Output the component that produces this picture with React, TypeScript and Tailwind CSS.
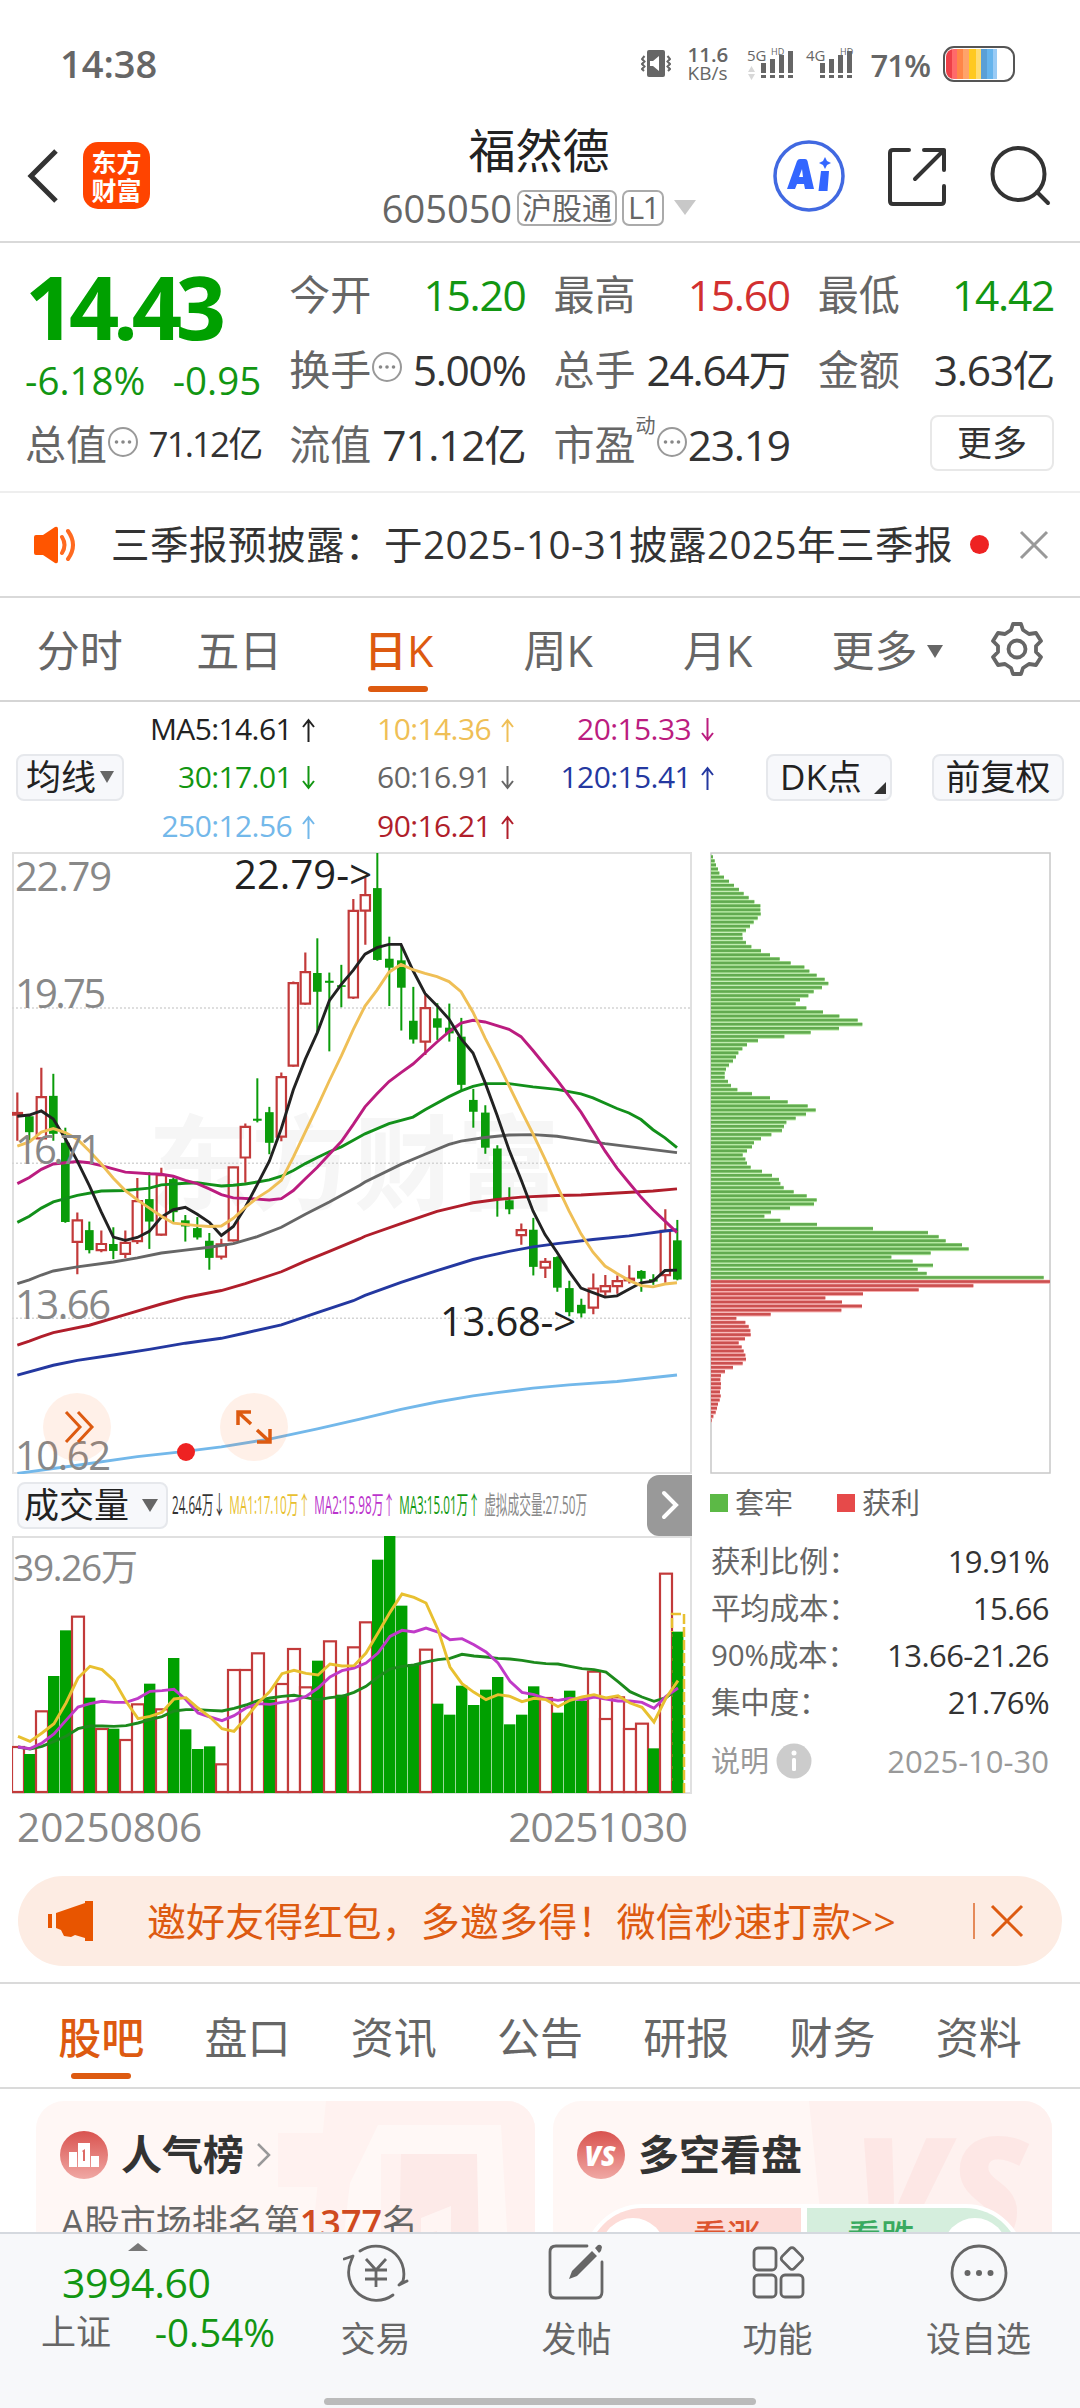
import { useState } from "react";
import type { ReactNode } from "react";

type Tone = "up" | "down";

// [tone, high, body top, body bottom, low] in plot units, y grows downwards
const candles: [Tone, number, number, number, number][] = [
  ["up", 617, 666, 672, 735],
  ["down", 670, 675, 714, 735],
  ["up", 556, 627, 730, 735],
  ["down", 571, 625, 718, 735],
  ["down", 703, 740, 934, 936],
  ["up", 911, 929, 984, 1062],
  ["down", 933, 954, 1003, 1011],
  ["up", 955, 987, 1004, 1008],
  ["down", 947, 988, 1005, 1025],
  ["up", 955, 984, 1013, 1022],
  ["up", 826, 882, 982, 988],
  ["down", 812, 878, 933, 1000],
  ["up", 801, 818, 966, 968],
  ["down", 825, 829, 910, 935],
  ["down", 917, 930, 945, 982],
  ["down", 922, 949, 972, 977],
  ["down", 961, 980, 1022, 1051],
  ["up", 975, 988, 1020, 1026],
  ["up", 798, 799, 980, 982],
  ["up", 693, 700, 777, 838],
  ["down", 582, 681, 686, 690],
  ["down", 652, 665, 740, 768],
  ["up", 568, 578, 726, 736],
  ["up", 345, 348, 552, 554],
  ["up", 274, 321, 400, 402],
  ["down", 239, 324, 370, 470],
  ["down", 323, 343, 348, 516],
  ["down", 304, 354, 358, 408],
  ["up", 143, 171, 385, 388],
  ["up", 90, 132, 172, 255],
  ["down", 30, 116, 292, 294],
  ["down", 235, 289, 311, 405],
  ["down", 258, 293, 360, 465],
  ["down", 358, 441, 487, 497],
  ["up", 375, 409, 493, 525],
  ["down", 398, 435, 458, 488],
  ["down", 399, 458, 472, 492],
  ["down", 434, 480, 598, 612],
  ["down", 608, 635, 664, 703],
  ["down", 648, 666, 752, 767],
  ["down", 746, 754, 878, 921],
  ["down", 849, 881, 903, 915],
  ["up", 938, 953, 967, 990],
  ["down", 924, 953, 1044, 1065],
  ["up", 1022, 1031, 1047, 1071],
  ["down", 1018, 1020, 1095, 1105],
  ["down", 1078, 1096, 1155, 1165],
  ["down", 1122, 1137, 1158, 1168],
  ["up", 1060, 1096, 1145, 1160],
  ["up", 1064, 1090, 1105, 1115],
  ["up", 1065, 1078, 1092, 1110],
  ["up", 1040, 1072, 1078, 1085],
  ["down", 1052, 1054, 1073, 1105],
  ["down", 1062, 1074, 1080, 1088],
  ["up", 903, 955, 1065, 1083],
  ["down", 929, 979, 1075, 1077],
];

const maLines = [
  {
    color: "#73b8ea",
    points:
      "52,1550 232,1530 412,1509 556,1496 664,1485 808,1466 952,1441 1080,1417 1203,1393 1311,1375 1419,1360 1491,1352 1599,1341 1707,1333 1851,1325 2031,1309",
  },
  {
    color: "#2438a0",
    points:
      "52,1309 160,1285 232,1273 340,1260 448,1246 556,1231 664,1219 736,1206 844,1186 952,1156 1060,1127 1095,1114 1203,1082 1311,1053 1419,1026 1455,1019 1527,1006 1599,995 1671,987 1779,977 1887,968 1995,956 2031,953",
  },
  {
    color: "#b01e2b",
    points:
      "52,1236 88,1226 124,1215 160,1205 268,1187 376,1161 484,1135 556,1119 664,1102 736,1085 844,1056 916,1030 988,1006 1080,975 1095,969 1203,938 1311,908 1383,894 1419,887 1491,879 1563,873 1671,869 1743,868 1851,863 1959,858 2031,853",
  },
  {
    color: "#666666",
    points:
      "52,1085 88,1076 124,1064 160,1054 232,1044 340,1032 412,1022 484,1010 556,1003 628,996 700,987 772,970 844,947 916,915 988,885 1080,844 1095,836 1203,793 1275,768 1347,744 1383,736 1455,727 1527,721 1600,720 1671,724 1743,733 1815,742 1923,753 2031,764",
  },
  {
    color: "#12901a",
    points:
      "52,935 88,920 124,900 160,885 232,869 304,858 376,857 448,851 484,843 556,839 592,838 628,842 664,846 700,844 736,841 772,836 808,831 844,822 880,808 916,791 952,776 988,762 1024,750 1060,734 1095,718 1167,693 1239,677 1275,659 1347,627 1383,613 1419,602 1455,595 1527,595 1599,603 1671,609 1743,620 1779,630 1851,656 1887,667 1923,683 1959,708 1995,728 2031,752",
  },
  {
    color: "#bb1c7f",
    points:
      "52,840 88,825 124,805 160,792 232,786 268,789 304,796 376,812 448,816 484,817 520,822 556,832 592,840 628,853 664,867 700,875 772,878 808,880 844,877 880,857 916,828 952,800 988,768 1024,737 1060,695 1095,652 1131,620 1167,590 1203,568 1239,547 1275,520 1311,493 1347,468 1383,447 1419,440 1455,444 1491,453 1527,462 1563,480 1599,514 1635,550 1671,586 1707,625 1743,665 1779,712 1815,760 1851,802 1887,838 1923,873 1959,904 1995,932 2031,960",
  },
  {
    color: "#222222",
    points:
      "52,675 88,672 124,662 160,682 196,730 232,785 268,845 304,910 340,971 376,979 412,972 448,957 484,922 520,904 556,898 592,915 628,935 664,967 700,945 736,898 772,842 808,785 844,705 880,610 916,535 952,470 988,392 1024,352 1060,317 1095,278 1131,262 1167,254 1203,254 1239,318 1275,374 1311,404 1347,437 1383,485 1419,520 1455,592 1491,672 1527,757 1563,830 1599,907 1635,965 1671,1008 1707,1055 1743,1096 1779,1107 1815,1118 1851,1115 1887,1099 1923,1083 1959,1079 1995,1053 2031,1052",
  },
  {
    color: "#efbf56",
    points:
      "52,748 88,738 124,714 160,705 196,715 232,731 268,760 304,792 340,827 376,857 412,880 448,900 484,920 520,937 556,940 592,943 628,945 664,944 700,925 736,898 772,875 808,856 844,832 880,775 916,713 952,652 988,588 1024,527 1060,462 1095,405 1131,366 1167,322 1203,303 1239,316 1275,325 1311,333 1347,345 1383,370 1419,420 1455,483 1491,540 1527,600 1563,660 1599,718 1635,780 1671,845 1707,907 1743,963 1779,1008 1815,1042 1851,1060 1887,1077 1923,1090 1959,1093 1995,1086 2031,1083",
  },
];

// chip distribution, one bar per price step
const trapped = [
  39, 44, 48, 54, 58, 72, 87, 102, 117, 131, 146, 163, 181, 181, 182, 173, 161, 150, 138, 127, 128,
  138, 154, 183, 210, 239, 272, 313, 328, 350, 374, 385, 366, 341, 325, 300, 287, 319, 369, 418, 473,
  487, 417, 332, 253, 174, 141, 127, 115, 108, 99, 87, 78, 74, 74, 84, 93, 112, 156, 210, 263, 323,
  347, 318, 287, 259, 252, 246, 214, 183, 162, 156, 141, 128, 136, 141, 152, 186, 216, 237, 241, 251,
  281, 320, 350, 342, 270, 213, 193, 241, 351, 519, 684, 716, 737, 786, 806, 692, 574, 638, 699, 653,
  680, 1031,
];
const profit = [
  1050, 820, 656, 489, 376, 426, 486, 424, 212, 109, 136, 146, 151, 152, 135, 116, 125, 131, 136, 138,
  128, 99, 75, 63, 61, 63, 62, 60, 62, 59, 54, 51, 47, 40, 35,
];

const volumes: [Tone, number][] = [
  ["up", 829], ["down", 853], ["up", 722], ["down", 619], ["down", 482], ["up", 438], ["down", 684],
  ["up", 775], ["down", 777], ["up", 808], ["up", 701], ["down", 642], ["up", 716], ["down", 565],
  ["down", 779], ["down", 838], ["down", 830], ["up", 881], ["up", 598], ["up", 598], ["up", 548],
  ["down", 690], ["up", 640], ["up", 535], ["up", 650], ["down", 573], ["up", 512], ["down", 675],
  ["up", 530], ["up", 455], ["down", 270], ["down", 199], ["down", 408], ["down", 583], ["up", 537],
  ["down", 702], ["down", 735], ["down", 648], ["down", 706], ["down", 660], ["down", 622],
  ["down", 764], ["down", 735], ["down", 650], ["up", 682], ["down", 729], ["down", 663],
  ["down", 693], ["up", 603], ["up", 745], ["up", 680], ["up", 775], ["up", 759], ["down", 836],
  ["up", 309], ["down", 486],
];

const volumeMas = [
  {
    color: "#1c8a1c",
    values: [
      832, 838, 830, 815, 800, 777, 769, 769, 770, 768, 760, 750, 741, 724, 720, 720, 722, 724, 716,
      706, 693, 685, 680, 677, 684, 690, 684, 680, 668, 650, 622, 598, 590, 586, 577, 570, 566, 554,
      559, 562, 566, 568, 572, 578, 582, 583, 590, 597, 600, 607, 636, 666, 682, 695, 684, 657,
    ],
  },
  {
    color: "#c03ac8",
    values: [
      832, 837, 820, 793, 752, 712, 702, 695, 698, 698, 686, 665, 663, 659, 690, 730, 742, 753, 738,
      715, 702, 704, 698, 693, 680, 655, 622, 603, 595, 580, 550, 500, 482, 487, 475, 487, 510, 507,
      525, 547, 580, 635, 668, 675, 687, 692, 686, 690, 682, 688, 694, 694, 698, 716, 680, 655,
    ],
  },
  {
    color: "#e8c030",
    values: [
      800, 815, 790, 762, 700, 625, 590, 600, 632, 695, 747, 740, 728, 688, 684, 715, 742, 777, 785,
      745, 700, 665, 612, 602, 611, 616, 583, 589, 588, 550, 490, 428, 373, 383, 400, 480, 592, 642,
      668, 690, 675, 680, 696, 686, 690, 711, 692, 682, 675, 685, 678, 700, 713, 757, 685, 633,
    ],
  },
];

const volY = (v: number) => (v - 199) / 3;

function StatusBar() {
  return (
    <div className="flex h-[110px] items-center pt-[17px] pl-[60px] pr-[65px] font-semibold text-[#666]">
      <span className="text-[38px]">14:38</span>
      <svg className="ml-auto" width="30" height="28" viewBox="0 0 30 28">
        <rect x="6" y="0" width="18" height="27" rx="2" fill="#666" />
        <path d="M9 11h3l6-5v15l-6-5H9z" fill="#fff" />
        <path
          d="M3.5 6 1 9l2.500 2.500L1 14l2.500 2.500L1 19l2 2M26.500 6l2.500 3-2.500 2.500L29 14l-2.500 2.500L29 19l-2 2"
          fill="none"
          stroke="#666"
          strokeWidth="2"
        />
      </svg>
      <div className="ml-[17px] w-[44px] text-[20.500px] leading-[19px]">
        <div>11.6</div>
        <div className="text-[19px] font-medium">KB/s</div>
      </div>
      <Signal label="5G" arrows className="ml-[15px]" />
      <Signal label="4G" className="ml-[9px]" />
      <span className="ml-[15px] pt-[3px] text-[31px] tracking-[-0.03em]">71%</span>
      <svg className="ml-[13px]" width="72" height="36" viewBox="0 0 72 36">
        <clipPath id="charge">
          <rect x="3" y="3" width="66" height="30" rx="8" />
        </clipPath>
        <rect x="1" y="1" width="70" height="34" rx="10" fill="#fff" stroke="#555" strokeWidth="2" />
        <g clipPath="url(#charge)">
          <rect x="3" y="3" width="6" height="30" fill="#ee4048" />
          <rect x="9" y="3" width="5" height="30" fill="#ff6a6a" />
          <rect x="14" y="3" width="6" height="30" fill="#ff8648" />
          <rect x="20" y="3" width="6" height="30" fill="#ffa36a" />
          <rect x="26" y="3" width="7" height="30" fill="#ffc91f" />
          <rect x="33" y="3" width="5" height="30" fill="#ffdc70" />
          <rect x="38" y="3" width="6" height="30" fill="#5a9fd6" />
          <rect x="44" y="3" width="6" height="30" fill="#66b4ec" />
          <rect x="50" y="3" width="4" height="30" fill="#9acbf5" />
        </g>
      </svg>
    </div>
  );
}

function Signal({ label, arrows, className }: { label: string; arrows?: boolean; className: string }) {
  return (
    <svg className={`overflow-visible ${className}`} width="50" height="36" viewBox="0 0 50 36" fill="#666">
      <text x="0" y="15" fontSize="15" fontWeight="500">
        {label}
      </text>
      <text x={arrows ? 24 : 34} y="9" fontSize="9" fontWeight="400">
        HD
      </text>
      {[17, 13, 9, 5].map((top, i) => (
        <g key={top}>
          <rect x={14 + i * 9} y={top} width="5" height={27 - top} />
          <rect x={14 + i * 9} y="29" width="5" height="3" />
        </g>
      ))}
      {arrows && <path d="M1 26l3.500-6 3.500 6zM1 28h7l-3.500 6z" fill="#d8d8d8" />}
    </svg>
  );
}

function Header() {
  return (
    <header className="flex h-[133px] items-center border-b-2 border-[#d9d9d9] pr-[28px] pl-[27px]">
      <div className="flex w-[326px] items-center">
        <svg width="32" height="54" viewBox="0 0 32 54" fill="none" stroke="#333" strokeWidth="5">
          <path d="M29 2 4 27l25 25" />
        </svg>
        <div className="ml-[24px] flex h-[67px] w-[67px] flex-col justify-center rounded-[15px] bg-[#ff4400] text-center text-[25px] font-bold leading-[28px] text-white">
          <span>东方</span>
          <span>财富</span>
        </div>
      </div>
      <div className="flex w-[372px] flex-col items-center">
        <h1 className="text-[47px] leading-[56px] text-[#222]">福然德</h1>
        <div className="mt-[8px] flex items-center gap-[5px] text-[38px] leading-[44px] text-[#666]">
          <span>605050</span>
          <span className="h-[36px] rounded-[7px] border-2 border-[#aaa] px-[3px] text-[30px] leading-[31px]">
            沪股通
          </span>
          <span className="h-[36px] rounded-[7px] border-2 border-[#aaa] px-[4px] text-[31px] leading-[31px] tracking-[-0.06em]">
            L1
          </span>
          <svg className="ml-[5px]" width="22" height="15" viewBox="0 0 22 15">
            <path d="M0 0h22L11 15z" fill="#c8c8c8" />
          </svg>
        </div>
      </div>
      <div className="ml-auto flex items-center">
        <svg width="72" height="72" viewBox="0 0 72 72">
          <circle cx="36" cy="36" r="34" fill="#fff" stroke="#4169e1" strokeWidth="3.500" />
          <path
            d="M14 49 24 21q1-2 3-2h5q2 0 2.500 2L41 49h-9l-1-5h-7l-2 5zM26 37h4l-1-8z"
            fill="#3366ff"
            fillRule="evenodd"
          />
          <path d="M48 31h8l-1.500 20h-9zM52 17l2 4 4 2-4 2-2 4-2-4-4-2 4-2z" fill="#3366ff" />
        </svg>
        <svg
          className="ml-[42px]"
          width="60"
          height="60"
          viewBox="0 0 60 60"
          fill="none"
          stroke="#333"
          strokeWidth="4"
          strokeLinecap="round"
          strokeLinejoin="round"
        >
          <path d="M22 4H6q-3 0-3 3v48q0 3 3 3h48q3 0 3-3V40M37 4h20v20M57 4 28 33" />
        </svg>
        <svg
          className="ml-[43px]"
          width="62"
          height="60"
          viewBox="0 0 62 60"
          fill="none"
          stroke="#333"
          strokeWidth="4"
          strokeLinecap="round"
        >
          <circle cx="28.500" cy="28" r="26" />
          <path d="m47 46 11 11" />
        </svg>
      </div>
    </header>
  );
}

function Dots() {
  return (
    <svg width="32" height="32" viewBox="0 0 32 32" className="mb-[6px] shrink-0">
      <circle cx="16" cy="16" r="14" fill="none" stroke="#999" strokeWidth="2" />
      <circle cx="9.500" cy="16" r="1.800" fill="#888" />
      <circle cx="16" cy="16" r="1.800" fill="#888" />
      <circle cx="22.500" cy="16" r="1.800" fill="#888" />
    </svg>
  );
}

function Cell({
  label,
  value,
  tone = "text-[#333]",
  info,
  sup,
}: {
  label: string;
  value: string;
  tone?: string;
  info?: boolean;
  sup?: string;
}) {
  return (
    <div className="flex h-[75px] items-center whitespace-nowrap">
      <span className="text-[41px] text-[#666]">{label}</span>
      {sup && <span className="mb-[38px] w-[21px] text-[20px] text-[#666]">{sup}</span>}
      {info && <Dots />}
      <span className={`ml-auto text-[42.500px] tracking-[-0.03em] ${tone}`}>{value}</span>
    </div>
  );
}

function Quote() {
  return (
    <section className="grid h-[250px] grid-cols-4 gap-x-[28px] border-b-2 border-[#eee] pr-[26px] pl-[25px] pt-[14px]">
      <div>
        <div className="h-[98px] text-[88px] font-bold leading-[98px] tracking-[-0.072em] text-[#00a000]">
          14.43
        </div>
        <div className="flex h-[52px] items-center justify-between text-[38.500px] text-[#129612]">
          <span>-6.18%</span>
          <span>-0.95</span>
        </div>
        <div className="flex h-[75px] items-center whitespace-nowrap">
          <span className="text-[41px] text-[#666]">总值</span>
          <Dots />
          <span className="ml-auto text-[35px] tracking-[-0.055em] text-[#333]">71.12亿</span>
        </div>
      </div>
      <div>
        <Cell label="今开" value="15.20" tone="text-[#129612]" />
        <Cell label="换手" value="5.00%" info />
        <Cell label="流值" value="71.12亿" />
      </div>
      <div>
        <Cell label="最高" value="15.60" tone="text-[#d23030]" />
        <Cell label="总手" value="24.64万" />
        <Cell label="市盈" value="23.19" sup="动" info />
      </div>
      <div>
        <Cell label="最低" value="14.42" tone="text-[#129612]" />
        <Cell label="金额" value="3.63亿" />
        <div className="flex h-[71px] items-center justify-end">
          <button
            type="button"
            className="h-[56px] w-[124px] rounded-[8px] border-2 border-[#e8e8e8] text-[35px] leading-[50px] text-[#333]"
          >
            更多
          </button>
        </div>
      </div>
    </section>
  );
}

function Notice() {
  return (
    <section className="flex h-[105px] items-center border-b-2 border-[#d9d9d9] pr-[30px] pl-[33px]">
      <svg width="46" height="38" viewBox="0 0 46 38">
        <path d="M1 11q0-2 2-2h7L22 1q3-1 3 2v32q0 3-3 2L10 29H3q-2 0-2-2z" fill="#ff5500" />
        <path
          d="M29 11q5 8 0 16M35 5q10 14 0 28"
          fill="none"
          stroke="#ff6a20"
          strokeWidth="4"
          strokeLinecap="round"
        />
      </svg>
      <p className="ml-[32px] text-[38.500px] tracking-[0.013em] whitespace-nowrap text-[#333]">
        三季报预披露：于2025-10-31披露2025年三季报
      </p>
      <span className="ml-auto h-[19px] w-[19px] shrink-0 rounded-full bg-[#ee2222]" />
      <svg
        className="ml-[29px] shrink-0"
        width="32"
        height="32"
        viewBox="0 0 32 32"
        stroke="#999"
        strokeWidth="3"
      >
        <path d="m3 3 26 26M29 3 3 29" />
      </svg>
    </section>
  );
}

function PeriodTabs() {
  const [active, setActive] = useState("日K");
  return (
    <nav className="flex h-[104px] items-center border-b-2 border-[#d5d5d5] text-[43px] text-[#666]">
      {["分时", "五日", "日K", "周K", "月K"].map((tab) => (
        <button
          key={tab}
          type="button"
          onClick={() => setActive(tab)}
          className={`relative h-full w-[159.500px] shrink-0 pt-[4px] ${tab === active ? "font-medium text-[#dd5a10]" : ""}`}
        >
          {tab}
          {tab === active && (
            <span className="absolute bottom-[8px] left-[49px] h-[6px] w-[60px] rounded-full bg-[#dd5a10]" />
          )}
        </button>
      ))}
      <button type="button" className="ml-[34px] flex items-center gap-[9px] pt-[4px]">
        更多
        <svg width="16" height="13" viewBox="0 0 16 13">
          <path d="M0 0h16L8 13z" fill="#666" />
        </svg>
      </button>
      <svg
        className="ml-[47px]"
        width="54"
        height="54"
        viewBox="0 0 54 54"
        fill="none"
        stroke="#666"
        strokeWidth="3.800"
        strokeLinejoin="round"
      >
        <path d="M23 2h8l2 6 6 4 7-1 5 8-5 5v6l5 5-5 8-7-1-6 4-2 6h-8l-2-6-6-4-7 1-5-8 5-5v-6l-5-5 5-8 7 1 6-4z" />
        <circle cx="27" cy="27" r="8.500" />
      </svg>
    </nav>
  );
}

const pill = "flex h-[47px] items-center rounded-[8px] border-2 border-[#e6e8ec] bg-[#f7f8fb] text-[#222]";

function MaLegend() {
  const ma = "text-right whitespace-nowrap";
  return (
    <section className="flex h-[150px] items-center pr-[16px] pl-[16px]">
      <button type="button" className={`${pill} w-[108px] justify-between px-[8px] text-[35px]`}>
        均线
        <svg width="14" height="12" viewBox="0 0 14 12">
          <path d="M0 0h14L7 12z" fill="#666" />
        </svg>
      </button>
      <div className="grid w-[592px] grid-cols-[191px_199px_200px] pt-[1px] text-[30px] leading-[48.500px] tracking-[-0.02em]">
        <span className={`${ma} text-[#222]`}>MA5:14.61<Arrow /></span>
        <span className={`${ma} text-[#efbf56]`}>10:14.36<Arrow /></span>
        <span className={`${ma} text-[#bb1c7f]`}>20:15.33<Arrow down /></span>
        <span className={`${ma} text-[#129612]`}>30:17.01<Arrow down /></span>
        <span className={`${ma} text-[#666]`}>60:16.91<Arrow down /></span>
        <span className={`${ma} text-[#2438a0]`}>120:15.41<Arrow /></span>
        <span className={`${ma} text-[#73b8ea]`}>250:12.56<Arrow /></span>
        <span className={`${ma} text-[#b01e2b]`}>90:16.21<Arrow /></span>
      </div>
      <button type="button" className={`${pill} ml-auto w-[126px] justify-between pr-[4px] pl-[12px] text-[35px]`}>
        <span>DK点</span>
        <svg className="mt-[22px]" width="12" height="12" viewBox="0 0 12 12">
          <path d="M12 0v12H0z" fill="#333" />
        </svg>
      </button>
      <button type="button" className={`${pill} ml-[40px] w-[132px] justify-center text-[35px]`}>
        前复权
      </button>
    </section>
  );
}

function Arrow({ down }: { down?: boolean }) {
  return (
    <svg
      className={`ml-[10px] inline-block align-[-2px] ${down ? "rotate-180" : ""}`}
      width="13"
      height="24"
      viewBox="0 0 13 24"
      fill="none"
      stroke="currentColor"
      strokeWidth="2"
    >
      <path d="M6.500 24V2M1 9l5.500-7L12 9" />
    </svg>
  );
}

function KLineChart() {
  return (
    <svg className="block" width="680" height="622" viewBox="0 0 680 622">
      <rect x="1" y="1" width="678" height="620" fill="#fff" stroke="#e0e0e0" strokeWidth="2" />
      <text x="136" y="350" fontSize="103" fontWeight="700" fill="#f6f6f6">
        东方财富
      </text>
      <g transform="translate(-12 -11.250) scale(0.33333 0.40816)">
        {[410, 790, 1170].map((y) => (
          <path
            key={y}
            d={`M36 ${y}H2076`}
            stroke="#d4d4d4"
            strokeWidth="1.500"
            strokeDasharray="2 2"
            vectorEffect="non-scaling-stroke"
          />
        ))}
        {candles.map(([tone, high, top, bottom, low], i) => {
          const x = 52 + i * 36;
          return tone === "up" ? (
            <g key={i} fill="none" stroke="#c23a3a" strokeWidth="2.200">
              <path d={`M${x} ${high}V${top}M${x} ${bottom}V${low}`} vectorEffect="non-scaling-stroke" />
              <rect
                x={x - 14}
                y={top + 1}
                width="28"
                height={Math.max(bottom - top - 2, 2)}
                vectorEffect="non-scaling-stroke"
              />
            </g>
          ) : (
            <g key={i} fill="#0a9c0a">
              <rect x={x - 3} y={high} width="6" height={low - high} />
              <rect x={x - 13} y={top} width="26" height={bottom - top} />
            </g>
          );
        })}
        {maLines.map((line) => (
          <polyline
            key={line.color}
            points={line.points}
            fill="none"
            stroke={line.color}
            strokeWidth="2.900"
            vectorEffect="non-scaling-stroke"
          />
        ))}
      </g>
      <g fontSize="40" fill="#888">
        <text x="3" y="39" textLength="97">22.79</text>
        <text x="3" y="156" textLength="91">19.75</text>
        <text x="3" y="312" textLength="87">16.71</text>
        <text x="3" y="467" textLength="96">13.66</text>
        <text x="3" y="618" textLength="96">10.62</text>
      </g>
      <g fontSize="40" fill="#222">
        <text x="222" y="37" textLength="138">22.79-&gt;</text>
        <text x="428" y="484" textLength="136">13.68-&gt;</text>
      </g>
      <circle cx="65" cy="575" r="34" fill="#ff6a20" fillOpacity="0.1" />
      <circle cx="242" cy="575" r="34" fill="#ff6a20" fillOpacity="0.1" />
      <g fill="none" stroke="#dd5a10" strokeWidth="3">
        <path d="m54 560 14 15-14 15M66 560l14 15-14 15" />
        <path d="M226 573v-13h13M227 561l12 11M258 577v13h-13M257 589l-12-11" strokeWidth="3.500" />
      </g>
      <circle cx="174" cy="600" r="9" fill="#ee2222" />
    </svg>
  );
}

function ChipChart() {
  return (
    <svg className="block" width="341" height="622" viewBox="0 0 341 622">
      <rect x="1" y="1" width="339" height="620" fill="#fff" stroke="#c8c8c8" strokeWidth="1.500" />
      {[...trapped, ...profit].map((end, i) => {
        const green = i < trapped.length;
        const width = (end - 33) / 3;
        const y = 2.900 + i * 4.085;
        return (
          <g key={i}>
            <rect x="1" y={y} width={width} height="4.085" fill={green ? "#b4e8a0" : "#f6b0b0"} />
            <rect x="1" y={y + 0.500} width={width} height="2.600" fill={green ? "#62ab50" : "#cc5050"} />
          </g>
        );
      })}
    </svg>
  );
}

function VolumeChart() {
  return (
    <svg className="block" width="680" height="258" viewBox="0 0 680 258">
      <rect x="1" y="1" width="678" height="256" fill="#fff" stroke="#e0e0e0" strokeWidth="2" />
      <text x="1" y="45" fontSize="37" fill="#888" textLength="125">39.26万</text>
      {volumes.map(([tone, top], i) => {
        const x = i * 12;
        const y = volY(top);
        return tone === "up" ? (
          <rect key={i} x={x} y={y + 1} width="12" height={255 - y} fill="#fff" stroke="#c23a3a" strokeWidth="2.200" />
        ) : (
          <rect key={i} x={x} y={y} width="11.400" height={257 - y} fill="#00a000" />
        );
      })}
      <path d="M672 257V78h-12v18" fill="none" stroke="#e8c030" strokeWidth="2.500" strokeDasharray="10 3" />
      <path d="M660 257V96" stroke="#8a7a20" strokeWidth="1.500" strokeDasharray="3 9" />
      {volumeMas.map((line) => (
        <polyline
          key={line.color}
          points={line.values.map((v, i) => `${6 + i * 12},${volY(v)}`).join(" ")}
          fill="none"
          stroke={line.color}
          strokeWidth="2.900"
        />
      ))}
    </svg>
  );
}

function VolumeHeader() {
  return (
    <div className="flex h-[62px] items-center pl-[5px]">
      <button type="button" className={`${pill} w-[151px] shrink-0 justify-between pr-[8px] pl-[5px] text-[35px]`}>
        成交量
        <svg width="16" height="13" viewBox="0 0 16 13">
          <path d="M0 0h16L8 13z" fill="#666" />
        </svg>
      </button>
      <div className="ml-[4px] w-[440px]">
        <div className="flex w-max origin-left scale-x-[0.467] gap-[9px] text-[25px] whitespace-nowrap">
          <span className="text-[#333]">24.64万↓</span>
          <span className="text-[#e8bf30]">MA1:17.10万↑</span>
          <span className="text-[#bb33cc]">MA2:15.98万↑</span>
          <span className="text-[#119911]">MA3:15.01万↑</span>
          <span className="text-[#888]">虚拟成交量:27.50万</span>
        </div>
      </div>
      <button
        type="button"
        className="ml-auto flex h-[61px] w-[45px] shrink-0 items-center justify-center rounded-l-[12px] bg-[#999]"
      >
        <svg width="18" height="30" viewBox="0 0 18 30" fill="none" stroke="#fff" strokeWidth="4" strokeLinecap="round">
          <path d="m3 3 12 12L3 27" />
        </svg>
      </button>
    </div>
  );
}

const chipStats = [
  ["获利比例：", "19.91%"],
  ["平均成本：", "15.66"],
  ["90%成本：", "13.66-21.26"],
  ["集中度：", "21.76%"],
];

function ChipPanel() {
  return (
    <div className="w-[341px]">
      <ChipChart />
      <div className="mt-[7px] flex h-[44px] items-center text-[29px] text-[#666]">
        <span className="mr-[7px] h-[18px] w-[18px] bg-[#5cb946]" />
        套牢
        <span className="mr-[7px] ml-[44px] h-[18px] w-[18px] bg-[#e64a4a]" />
        获利
      </div>
      <dl className="mt-[13px]">
        {chipStats.map(([label, value]) => (
          <div key={label} className="flex h-[47px] items-center justify-between pr-[2px] pl-[1px]">
            <dt className="text-[29.500px] tracking-[-0.005em] text-[#666]">{label}</dt>
            <dd className="text-[31px] tracking-[-0.018em] text-[#333]">{value}</dd>
          </div>
        ))}
      </dl>
      <div className="mt-[13px] flex h-[44px] items-center pr-[2px] pl-[1px] text-[#999]">
        <span className="text-[29px]">说明</span>
        <svg className="ml-[7px]" width="36" height="36" viewBox="0 0 36 36">
          <circle cx="18" cy="18" r="17.500" fill="#ccc" />
          <circle cx="18" cy="10" r="2.500" fill="#fff" />
          <rect x="16" y="15" width="4" height="13" rx="1.500" fill="#fff" />
        </svg>
        <span className="ml-auto text-[31px]">2025-10-30</span>
      </div>
    </div>
  );
}

function Charts() {
  return (
    <section className="flex h-[1024px] gap-[18px] pl-[12px]">
      <div className="w-[680px]">
        <KLineChart />
        <VolumeHeader />
        <VolumeChart />
        <div className="flex justify-between px-[5px] pt-[3px] text-[40.500px] leading-[60px] text-[#888]">
          <span>20250806</span>
          <span className="tracking-[-0.02em]">20251030</span>
        </div>
      </div>
      <ChipPanel />
    </section>
  );
}

function InviteBanner() {
  return (
    <div className="mx-[18px] flex h-[90px] shrink-0 items-center rounded-full bg-[#fdece3] pr-[38px] pl-[29px] text-[#dd5a10]">
      <svg width="48" height="42" viewBox="0 0 48 42" fill="#e85500">
        <path d="M1 14h4v14H1zM9 13l29-10V1h8v40h-8v-3l-10-3-4 2-7-1-3-6-5-2z" />
      </svg>
      <p className="ml-[52px] text-[39px] tracking-[0.003em] whitespace-nowrap">
        邀好友得红包，多邀多得！微信秒速打款&gt;&gt;
      </p>
      <span className="ml-auto h-[36px] w-[2px] bg-[#e58a5a]" />
      <svg className="ml-[15px]" width="34" height="34" viewBox="0 0 34 34" stroke="#dd5a10" strokeWidth="3">
        <path d="m2 2 30 30M32 2 2 32" />
      </svg>
    </div>
  );
}

function InfoTabs() {
  const [active, setActive] = useState("股吧");
  return (
    <nav className="mt-[16px] flex h-[107px] shrink-0 items-center border-y-2 border-[#dadada] px-[28px] text-[43px] text-[#666]">
      {["股吧", "盘口", "资讯", "公告", "研报", "财务", "资料"].map((tab) => (
        <button
          key={tab}
          type="button"
          onClick={() => setActive(tab)}
          className={`relative h-full flex-1 pt-[5px] ${tab === active ? "font-medium text-[#dd5a10]" : ""}`}
        >
          {tab}
          {tab === active && (
            <span className="absolute bottom-[8px] left-[43px] h-[6px] w-[60px] rounded-full bg-[#dd5a10]" />
          )}
        </button>
      ))}
    </nav>
  );
}

function CardTitle({ icon, children }: { icon: ReactNode; children: ReactNode }) {
  return (
    <div className="relative flex h-[50px] items-center gap-[12px] text-[41px] font-bold text-[#333]">
      <svg width="50" height="50" viewBox="0 0 50 50">
        <defs>
          <linearGradient id="badge" x1="0" y1="0" x2="0" y2="1">
            <stop offset="0" stopColor="#d9534f" />
            <stop offset="1" stopColor="#f0a8a4" />
          </linearGradient>
        </defs>
        <circle cx="25" cy="25" r="24" fill="url(#badge)" />
        {icon}
      </svg>
      {children}
    </div>
  );
}

function Cards() {
  return (
    <section className="flex min-h-0 flex-1 gap-[18px] overflow-hidden pt-[12px] pl-[36px]">
      <article className="relative h-[200px] w-[499px] shrink-0 overflow-hidden rounded-[28px] bg-[#fff7f5] px-[23px] pt-[29px]">
        <svg className="absolute inset-0" width="499" height="200" viewBox="0 0 499 200">
          <path d="M290 0h209v200H270z" fill="#fff2f0" />
          <path d="M242 32h46v54h-46z" fill="#fff2f0" />
          <path d="M342 24h123l10 176h-53V53h-77v147h-45l14-118z" fill="#fff8f6" />
          <path d="M365 53h76l3 147h-82z" fill="#fdeae8" />
          <path d="M385 117l30-12v95h-14v-70l-16 4z" fill="#fff5f3" />
        </svg>
        <CardTitle
          icon={
            <g fill="#fff">
              <path d="M10 22h8v15h-8zM19 13h12v24H19zM32 26h8v11h-8z" />
              <path d="m23 21 3-2v12h-2v-9z" fill="#dd6a66" />
            </g>
          }
        >
          <span>人气榜</span>
          <svg width="16" height="24" viewBox="0 0 16 24" fill="none" stroke="#999" strokeWidth="2.500">
            <path d="m2 1 11 11L2 23" />
          </svg>
        </CardTitle>
        <p className="relative mt-[18px] pl-[2px] text-[36px] leading-[50px] whitespace-nowrap text-[#666]">
          A股市场排名第
          <span className="font-semibold text-[#d04a20]">1377</span>名
        </p>
      </article>
      <article className="relative h-[200px] w-[499px] shrink-0 overflow-hidden rounded-[28px] bg-[#fff7f5] px-[23px] pt-[29px]">
        <svg className="absolute inset-0" width="499" height="200" viewBox="0 0 499 200">
          <path d="M256 0h243v200H276z" fill="#fef1ef" />
          <text x="300" y="145" fontSize="150" fontWeight="800" fontStyle="italic" fill="#fde7e5">
            VS
          </text>
        </svg>
        <CardTitle
          icon={
            <text x="24" y="36" textAnchor="middle" fontSize="29" fontWeight="800" fontStyle="italic" fill="#fff" textLength="31" lengthAdjust="spacingAndGlyphs">
              VS
            </text>
          }
        >
          多空看盘
        </CardTitle>
        <div className="relative mt-[24px] ml-[7px] flex h-[96px] w-[442px] gap-[6px] overflow-hidden rounded-t-[60px] border-4 border-white bg-white text-[34px] leading-[56px] font-medium">
          <div className="flex flex-1 bg-[#fddcd8] text-[#dd5530]">
            <span className="mt-[10px] ml-[14px] h-[64px] w-[64px] rounded-full bg-white" />
            <span className="ml-[28px]">看涨</span>
          </div>
          <div className="flex flex-1 justify-end bg-[#d5eedd] text-[#3aaa60]">
            <span className="mr-[28px]">看跌</span>
            <span className="mt-[10px] mr-[14px] h-[64px] w-[64px] rounded-full bg-white" />
          </div>
        </div>
      </article>
    </section>
  );
}

function NavItem({ label, children }: { label: string; children: ReactNode }) {
  return (
    <button type="button" className="flex w-[201px] flex-col items-center pt-[9px] text-[35px] text-[#666]">
      <svg
        width="66"
        height="60"
        viewBox="0 0 66 60"
        fill="none"
        stroke="#666"
        strokeWidth="2.800"
        strokeLinecap="round"
        strokeLinejoin="round"
      >
        {children}
      </svg>
      <span className="mt-[12px] leading-[48px]">{label}</span>
    </button>
  );
}

function BottomBar() {
  return (
    <footer className="flex h-[176px] shrink-0 flex-col border-t-2 border-[#d5d9df] bg-[#f7f8fa]">
      <div className="flex h-[164px]">
        <div className="relative w-[275px] pt-[23px] text-[#129612]">
          <svg className="absolute top-[9px] left-[128px]" width="20" height="8" viewBox="0 0 20 8">
            <path d="M10 0l10 8H0z" fill="#777" />
          </svg>
          <div className="pl-[62px] text-[41px] leading-[50px] tracking-[-0.01em]">3994.60</div>
          <div className="flex items-center justify-between pl-[41px] text-[38.500px] leading-[50px]">
            <span className="text-[35px] text-[#666]">上证</span>
            <span>-0.54%</span>
          </div>
        </div>
        <NavItem label="交易">
          <path d="M17 8A28 28 0 0 1 60 38l-4 4 8-4M50 52A28 28 0 0 1 8 18l2-5-9 3" />
          <path d="M23 16l10 11 10-11M33 27v17M22 27h22M22 36h22" strokeLinecap="butt" />
        </NavItem>
        <NavItem label="发帖">
          <path d="M43 3H12q-6 0-6 6v40q0 6 6 6h40q6 0 6-6V19" />
          <path d="M25 36l3-8L48 8l5 5-20 20zM51 5l3-3q3-1 4 2l-1 4-2 2z" fill="#666" stroke="none" />
        </NavItem>
        <NavItem label="功能">
          <rect x="9" y="5" width="22" height="22" rx="4" />
          <rect x="9" y="32" width="22" height="22" rx="4" />
          <rect x="36" y="32" width="22" height="22" rx="4" />
          <rect x="38.500" y="7" width="17" height="17" rx="3" transform="rotate(45 47 15.500)" />
        </NavItem>
        <NavItem label="设自选">
          <circle cx="33" cy="30" r="27" />
          <g fill="#666" stroke="none">
            <circle cx="21.500" cy="30" r="3" />
            <circle cx="33" cy="30" r="3" />
            <circle cx="44.500" cy="30" r="3" />
          </g>
        </NavItem>
      </div>
      <div className="mx-auto h-[7px] w-[432px] rounded-full bg-[#bbb]" />
    </footer>
  );
}

export default function App() {
  return (
    <div className="flex h-[2408px] w-[1080px] flex-col overflow-hidden bg-white font-['Open_Sans','Noto_Sans_CJK_SC',sans-serif] leading-normal">
      <StatusBar />
      <Header />
      <Quote />
      <Notice />
      <PeriodTabs />
      <MaLegend />
      <Charts />
      <InviteBanner />
      <InfoTabs />
      <Cards />
      <BottomBar />
    </div>
  );
}
